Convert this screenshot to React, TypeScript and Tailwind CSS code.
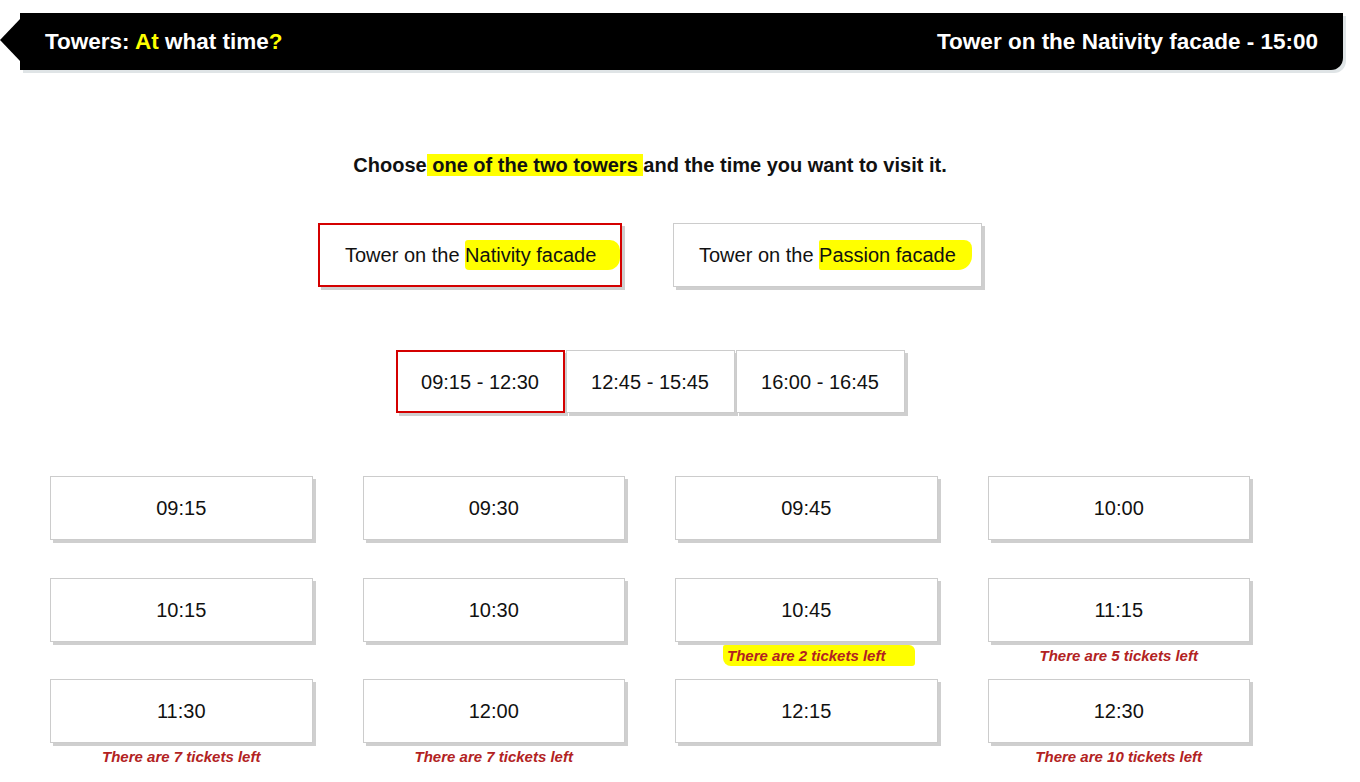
import React from "react";

const font = { fontFamily: '"Liberation Sans", Arial, sans-serif' };

type Slot = { time: string; note?: string; hl?: boolean };

const slots: Slot[] = [
  { time: "09:15" },
  { time: "09:30" },
  { time: "09:45" },
  { time: "10:00" },
  { time: "10:15" },
  { time: "10:30" },
  { time: "10:45", note: "There are 2 tickets left", hl: true },
  { time: "11:15", note: "There are 5 tickets left" },
  { time: "11:30", note: "There are 7 tickets left" },
  { time: "12:00", note: "There are 7 tickets left" },
  { time: "12:15" },
  { time: "12:30", note: "There are 10 tickets left" },
];

export default function App() {
  return (
    <div className="w-[1360px] h-[782px] bg-white overflow-hidden text-[#111]" style={font}>
      {/* Header */}
      <div className="pt-[13px] pl-[20px] pr-[17px]">
        <div className="relative h-[57px] bg-black rounded-br-[12px] shadow-[3px_3px_0_#dfe4e6] flex items-center justify-between pl-[25px] pr-[25px]">
          <svg className="absolute left-[-20px] top-[5px]" width="21" height="44" viewBox="0 0 21 44">
            <polygon points="21,0 0,22 21,44" fill="#000" />
          </svg>
          <div className="text-[22.5px] font-bold text-white leading-[26px]">
            Towers: <span className="text-[#ffff00]">At</span> what time<span className="text-[#ffff00]">?</span>
          </div>
          <div className="text-[22.5px] font-bold text-white leading-[26px]">Tower on the Nativity facade - 15:00</div>
        </div>
      </div>

      {/* Content */}
      <div className="w-[1300px] flex flex-col items-center">
        <p className="mt-[83px] text-[20px] font-bold leading-[24px]">
          Choose<span className="bg-[#ffff00]"> one of the two towers </span>and the time you want to visit it.
        </p>

        <div className="mt-[46px] flex gap-[51px]">
          <button className="h-[64px] w-[304px] pl-[25px] text-left bg-white border-2 border-[#d40000] shadow-[3px_3px_0_#cfcfcf] text-[20px]">
            Tower on the{" "}
            <span className="bg-[#ffff00] rounded-[3px_10px_12px_4px] pr-[24px] -mr-[24px] py-[4px]">Nativity facade</span>
          </button>
          <button className="h-[64px] w-[309px] pl-[25px] text-left bg-white border border-[#cccccc] shadow-[3px_3px_0_#cfcfcf] text-[20px]">
            Tower on the{" "}
            <span className="bg-[#ffff00] rounded-[2px_8px_14px_2px] pr-[16px] -mr-[16px] py-[4px]">Passion facade</span>
          </button>
        </div>

        <div className="mt-[63px] flex gap-[1px]">
          <button className="w-[169px] h-[63px] bg-white border-2 border-[#d40000] shadow-[3px_3px_0_#cfcfcf] text-[20px]">
            09:15 - 12:30
          </button>
          <button className="w-[169px] h-[63px] bg-white border border-[#cccccc] shadow-[3px_3px_0_#cfcfcf] text-[20px]">
            12:45 - 15:45
          </button>
          <button className="w-[169px] h-[63px] bg-white border border-[#cccccc] shadow-[3px_3px_0_#cfcfcf] text-[20px]">
            16:00 - 16:45
          </button>
        </div>

        <div className="mt-[63px] w-[1200px] grid grid-cols-4 gap-x-[50px]">
          {slots.map((s) => (
            <div key={s.time} className="h-[101.5px] flex flex-col">
              <button className="h-[64px] w-full bg-white border border-[#cccccc] shadow-[3px_3px_0_#cfcfcf] text-[20px]">
                {s.time}
              </button>
              {s.note && (
                <div className="mt-[5px] flex justify-center">
                  <span
                    className={
                      "text-[15px] font-bold italic text-[#b22222] leading-[17px] " +
                      (s.hl
                        ? "bg-[#ffff00] pl-[4px] -ml-[4px] pr-[30px] -mr-[30px] py-[2px] -my-[2px] rounded-[2px_6px_3px_8px]"
                        : "")
                    }
                  >
                    {s.note}
                  </span>
                </div>
              )}
            </div>
          ))}
        </div>
      </div>
    </div>
  );
}
